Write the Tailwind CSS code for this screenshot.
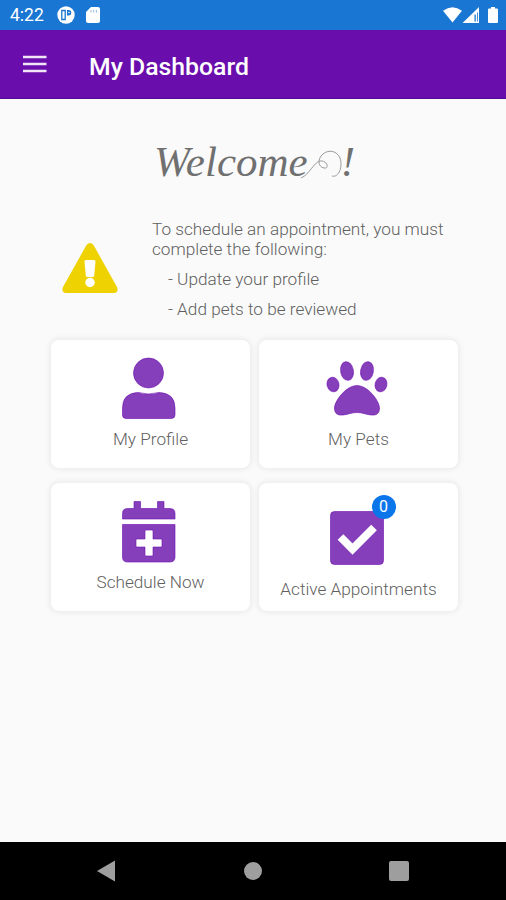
<!DOCTYPE html>
<html lang="en">
<head>
  <meta charset="UTF-8">
  <meta name="viewport" content="width=device-width, initial-scale=1">
  <title>My Dashboard</title>
  <script src="https://cdn.jsdelivr.net/npm/@tailwindcss/browser@4"></script>
</head>
<body class="h-[900px] flex flex-col overflow-hidden bg-[#fafafa] font-['Roboto',sans-serif] text-[#757575]">

  <!-- Status bar -->
  <div class="h-[30px] shrink-0 bg-[#1976d2] text-white flex items-center justify-between pl-2.5 pr-[7px]">
    <div class="flex items-center">
      <span class="w-[47px] text-[17.5px] leading-none pt-0.5">4:22</span>
      <svg class="w-[18px] h-[18px]" viewBox="0 0 18 18">
        <circle cx="9" cy="9" r="8.7" fill="#fff"/>
        <path d="M4.800 4.500h3.400v9H4.800z" fill="none" stroke="#1976d2" stroke-width="1.300"/>
        <path d="M10 4h1.500a2.500 2.500 0 0 1 0 5.500H10z" fill="#1976d2"/>
        <circle cx="12" cy="6.500" r=".8" fill="#fff"/>
      </svg>
      <svg class="w-[14px] h-[16px] ml-[11px]" viewBox="0 0 14 16">
        <path d="M5 0h7a2 2 0 0 1 2 2v12a2 2 0 0 1-2 2H2a2 2 0 0 1-2-2V5z" fill="#fff"/>
        <path d="M5 3v2.500M7.7 3v2.500M10.4 3v2.500" stroke="#8dbbe9" stroke-width="1"/>
      </svg>
    </div>
    <svg class="w-[57px] h-[18px]" viewBox="0 0 57 18" fill="#fff">
      <path d="M1 4.8Q10.500 -2.2 20 4.8L10.500 16.500z"/>
      <path d="M37 1v16H20.500z"/>
      <path d="M32.500 8.500h1.300v7h-1.300zM35 6.500h.8v9H35z" fill="#1976d2"/>
      <path d="M47 2.500h2V1h4v1.500h2q1 0 1 1V16q0 1-1 1h-8q-1 0-1-1V3.500q0-1 1-1z"/>
    </svg>
  </div>

  <!-- App bar -->
  <header class="h-[69px] shrink-0 bg-[#6a0dad] border-b border-[#520a94] text-white flex items-center pl-[23px]">
    <svg class="w-[24px] h-[20px]" viewBox="0 0 24 20">
      <path d="M0 3h23.500M0 10h23.500M0 17h23.500" stroke="#f1e6f8" stroke-width="2.600"/>
    </svg>
    <h1 class="ml-[42px] pt-[5px] text-[24.8px] font-medium">My Dashboard</h1>
  </header>

  <main class="flex-1 flex flex-col pl-[51px] pr-[48px]">
    <h2 class="mt-[32px] ml-[103px] h-[62px] flex font-['Liberation_Serif',serif] italic text-[43px] leading-[62px] text-[#707070]">
      <span>Welcome</span>
      <svg class="w-[42px] h-[40px] mt-[14px] -ml-[8px] shrink-0" viewBox="0 0 42 40" fill="none" stroke="#999" stroke-width="1">
        <path d="M1 33C10 29 13 18 20 16C27 15 30 24 24 23C18 22 17 14 23 9C29 4 37 6 40 13C43 21 39 33 32 31"/>
      </svg>
      <span class="-ml-px">!</span>
    </h2>

    <div class="mt-[26px] flex text-[17.2px] leading-5 font-light text-[#5f5f5f]">
      <svg class="w-[56px] h-[50px] ml-[11px] mt-[24px] shrink-0" viewBox="0 0 56 50">
        <path d="M24.500 2Q28-2 31.500 2L55 44Q57 49.500 52 50H4Q-1 49.500 1 44z" fill="#eed202"/>
        <path d="M22.500 18.500q0-1.500 1.500-1.500h8q1.500 0 1.500 1.500l-1.300 14q-.2 1.500-1.500 1.500h-5.400q-1.300 0-1.500-1.500z" fill="#fff"/>
        <circle cx="28" cy="39.500" r="4.700" fill="#fff"/>
      </svg>
      <div class="ml-[34px] whitespace-nowrap">
        <p>To schedule an appointment, you must<br>complete the following:</p>
        <p class="mt-2.5 ml-4">- Update your profile</p>
        <p class="mt-2.5 ml-4">- Add pets to be reviewed</p>
      </div>
    </div>

    <div class="mt-[21px] grid grid-cols-2 gap-x-[9px] gap-y-[15px] text-[17.2px] leading-5 font-light text-[#5f5f5f]">
      <div class="h-[128px] pt-[17px] flex flex-col items-center bg-white rounded-lg shadow-[0_0_5px_2px_rgba(0,0,0,0.06)]">
        <svg class="w-[64px] h-[64px] mr-px" viewBox="0 0 64 64" fill="#863fba" stroke="#6a0dad" stroke-opacity=".6">
          <circle cx="30.500" cy="16" r="15"/>
          <path d="M20 35.500Q30.500 38.500 41 35.500Q57 36 57 51V58Q57 61.500 53 61.500H8Q4.500 61.500 4.500 58V51Q4.500 36 20 35.500z"/>
        </svg>
        <p class="mt-[8px]">My Profile</p>
      </div>

      <div class="h-[128px] pt-[17px] flex flex-col items-center bg-white rounded-lg shadow-[0_0_5px_2px_rgba(0,0,0,0.06)]">
        <svg class="w-[64px] h-[64px] mr-px" viewBox="0 0 64 64" fill="#863fba" stroke="#6a0dad" stroke-opacity=".6">
          <ellipse cx="7" cy="27.500" rx="5.900" ry="7.300" transform="rotate(-15 7 27.500)"/>
          <ellipse cx="21" cy="14" rx="6.400" ry="9.400" transform="rotate(-10 21 14)"/>
          <ellipse cx="41" cy="14" rx="6.400" ry="9.400" transform="rotate(10 41 14)"/>
          <ellipse cx="55" cy="27.500" rx="5.900" ry="7.300" transform="rotate(15 55 27.500)"/>
          <path d="M31 28.500C42 28.500 53.500 44 53.500 51C53.500 57 50 58.500 45 58C40 57.500 36 55.500 31 55.500C26 55.500 22 57.500 17 58C12 58.500 8.500 57 8.500 51C8.500 44 20 28.500 31 28.500z"/>
        </svg>
        <p class="mt-[8px]">My Pets</p>
      </div>

      <div class="h-[128px] pt-[17px] flex flex-col items-center bg-white rounded-lg shadow-[0_0_5px_2px_rgba(0,0,0,0.06)]">
        <svg class="w-[64px] h-[64px] mr-px" viewBox="0 0 64 64" fill="#863fba" stroke="#6a0dad" stroke-opacity=".6">
          <path d="M16 1.500h6.500v7h17v-7H46v7h6q5 0 5 5v5.500H4.500v-5.500q0-5 5-5H16z"/>
          <path d="M4.500 24.500H57V57q0 5-5 5H9.500q-5 0-5-5z"/>
          <path d="M27 31q0-1 1-1h6q1 0 1 1v8h8q1 0 1 1v6q0 1-1 1h-8v8q0 1-1 1h-6q-1 0-1-1v-8h-8q-1 0-1-1v-6q0-1 1-1h8z" fill="#fff"/>
        </svg>
        <p class="mt-[8px]">Schedule Now</p>
      </div>

      <div class="h-[128px] pt-[28px] flex flex-col items-center bg-white rounded-lg shadow-[0_0_5px_2px_rgba(0,0,0,0.06)]">
        <div class="relative mr-[4px]">
          <svg class="w-[54px] h-[54px]" viewBox="0 0 54 54">
            <rect x=".5" y=".5" width="53" height="53" rx="4" fill="#863fba" stroke="#6a0dad" stroke-opacity=".6"/>
            <path d="M10.500 26L22.500 38L44 16.500" fill="none" stroke="#fff" stroke-width="8"/>
          </svg>
          <span class="absolute -top-[16px] left-[42px] w-6 h-6 rounded-full bg-[#0b75ea] text-white text-base leading-6 font-normal text-center">0</span>
        </div>
        <p class="mt-[14px]">Active Appointments</p>
      </div>
    </div>
  </main>

  <!-- Android navigation -->
  <nav class="h-[58px] shrink-0 bg-black flex items-center justify-between px-[97px]">
    <svg class="w-[18px] h-[22px]" viewBox="0 0 18 22"><path d="M18 .5v21L0 11z" fill="#9e9e9e"/></svg>
    <div class="w-[18px] h-[18px] ml-[2px] rounded-full bg-[#9e9e9e]"></div>
    <div class="w-5 h-5 rounded-xs bg-[#9e9e9e]"></div>
  </nav>

</body>
</html>
